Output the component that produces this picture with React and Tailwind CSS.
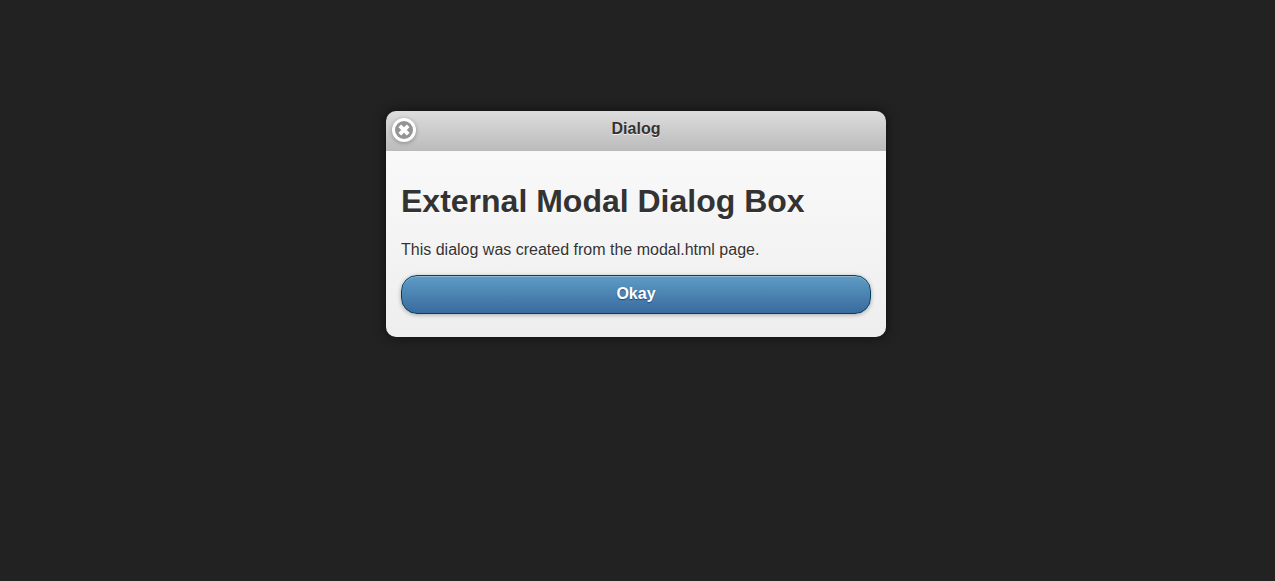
import React, { useState } from "react";

function CloseIcon() {
  return (
    <svg viewBox="0 0 18 18" className="size-[18px]" aria-hidden="true">
      <circle cx="9" cy="9" r="9" fill="#949494" />
      <path d="M4.8 4.8 13.2 13.2M13.2 4.8 4.8 13.2" stroke="#fff" strokeWidth="3.8" fill="none" />
    </svg>
  );
}

export default function App() {
  const [open, setOpen] = useState(true);
  const close = () => setOpen(false);

  return (
    <main className="min-h-screen bg-[#222] pt-[111px] pr-[19px] pb-8 pl-4 font-['Liberation_Sans',Arial,sans-serif] text-base text-[#333]">
      {open && (
        <section
          role="dialog"
          aria-modal="true"
          aria-labelledby="dialog-title"
          className="mx-auto max-w-[500px] overflow-hidden rounded-[10px] shadow-[0_0_12px_rgba(0,0,0,0.6)]"
        >
          <header className="grid h-10 grid-cols-[36px_1fr_36px] items-center bg-linear-to-b from-[#ddd] to-[#bbb]">
            <button
              type="button"
              aria-label="Close"
              onClick={close}
              className="mt-[-2px] ml-[6px] flex size-6 cursor-pointer items-center justify-center rounded-full bg-white shadow-[0_1px_4px_rgba(0,0,0,0.3)]"
            >
              <CloseIcon />
            </button>
            <h2
              id="dialog-title"
              className="pb-1 text-center leading-5 font-bold [text-shadow:0_1px_0_#eee]"
            >
              Dialog
            </h2>
          </header>
          <div className="bg-linear-to-b from-[#f9f9f9] to-[#eee] px-[15px] pt-8 pb-[23px] [text-shadow:0_1px_0_#fff]">
            <h1 className="text-[32px] leading-9 font-bold">External Modal Dialog Box</h1>
            <p className="mt-[21px] leading-5">This dialog was created from the modal.html page.</p>
            <button
              type="button"
              onClick={close}
              className="mt-[15px] flex h-[39px] w-full cursor-pointer justify-center rounded-[16px] border border-[#044062] bg-linear-to-b from-[#5f9cc5] to-[#396b9e] pt-2 leading-5 font-bold text-white shadow-[0_1px_4px_rgba(0,0,0,0.3),inset_0_1px_0_rgba(255,255,255,0.3)] [text-shadow:0_1px_1px_#194b7e]"
            >
              Okay
            </button>
          </div>
        </section>
      )}
    </main>
  );
}
